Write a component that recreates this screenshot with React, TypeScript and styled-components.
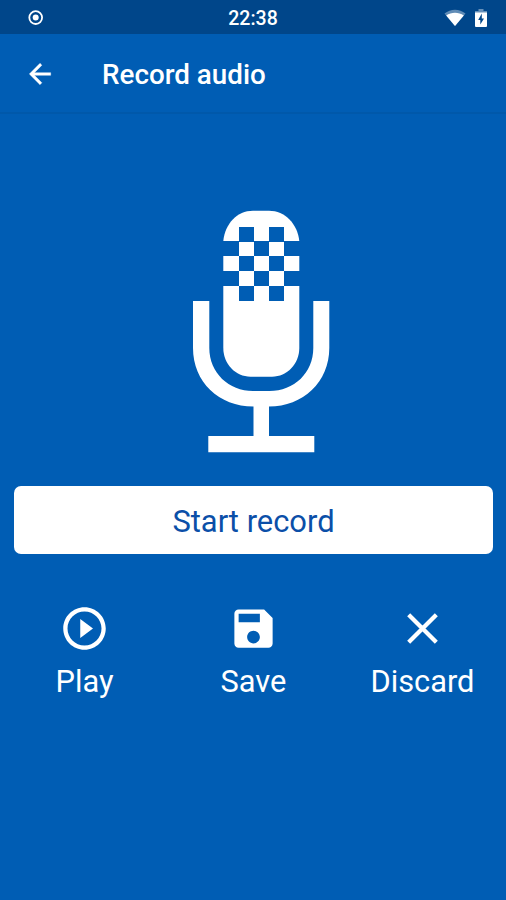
import React from "react";
import styled, { createGlobalStyle } from "styled-components";

const GlobalStyle = createGlobalStyle`
  * { box-sizing: border-box; }
  body { margin: 0; background: #005db4; }
`;

const Screen = styled.div`
  width: 506px;
  height: 900px;
  display: flex;
  flex-direction: column;
  background: #005db4;
  color: #fff;
  font-family: Roboto, "Liberation Sans", sans-serif;
  overflow: hidden;
`;

const StatusBar = styled.header`
  height: 34px;
  flex: none;
  display: grid;
  grid-template-columns: 1fr auto 1fr;
  align-items: center;
  padding: 2px 18px 0 28px;
  background: #00468a;
`;

const StatusIcons = styled.div<{ $end?: boolean }>`
  display: flex;
  align-items: center;
  gap: 8px;
  justify-content: ${(p) => (p.$end ? "flex-end" : "flex-start")};
`;

const Clock = styled.time`
  font-size: 19.5px;
  font-weight: 500;
  line-height: 22px;
  transform: translate(-5px, 1px);
`;

const AppBar = styled.nav`
  height: 80px;
  flex: none;
  display: flex;
  align-items: center;
  padding: 2px 0 0 24px;
  gap: 46px;
  border-bottom: 2px solid #0058aa;
`;

const IconButton = styled.button`
  display: flex;
  padding: 0;
  border: 0;
  background: none;
  color: inherit;
`;

const Title = styled.h1`
  margin: 0;
  padding-top: 2px;
  font-size: 27.8px;
  font-weight: 500;
  line-height: 32px;
`;

const Main = styled.main`
  display: flex;
  flex-direction: column;
  padding-top: 96px;
`;

const Microphone = styled.svg`
  display: block;
  margin-left: 193px;
  flex: none;
`;

const RecordButton = styled.button`
  height: 68px;
  margin: 33px 13px 0 14px;
  padding: 4px 0 0;
  border: 0;
  border-radius: 7px;
  background: #fff;
  color: #0b4fa8;
  font: 400 30.9px/36px Roboto, "Liberation Sans", sans-serif;
`;

const Actions = styled.div`
  display: grid;
  grid-template-columns: repeat(3, 169px);
  margin-top: 49px;
`;

const Action = styled.button`
  display: flex;
  flex-direction: column;
  align-items: center;
  gap: 10px;
  padding: 0;
  border: 0;
  background: none;
  color: #fff;
  font: 400 30.8px/36px Roboto, "Liberation Sans", sans-serif;
`;

const ActionIcon = styled.svg`
  display: block;
  width: 51px;
  height: 51px;
  fill: currentColor;
`;

const holes = [
  [46, 17], [76, 17],
  [30, 31], [61, 31], [91, 31],
  [46, 46], [76, 46],
  [30, 61], [61, 61], [91, 61],
  [46, 76], [76, 76],
];

export default function App() {
  return (
    <Screen>
      <GlobalStyle />
      <StatusBar>
        <StatusIcons>
          <svg width="16" height="16" viewBox="0 0 16 16" fill="none">
            <circle cx="7.7" cy="7.6" r="6.4" stroke="#fff" strokeWidth="1.8" />
            <circle cx="7.7" cy="7.6" r="3" fill="#fff" />
          </svg>
        </StatusIcons>
        <Clock>22:38</Clock>
        <StatusIcons $end>
          <svg width="22" height="18" viewBox="0 0 22 18">
            <path d="M0.5 4.5C6.5-.6 15.500-.6 21.500 4.500L11 17Z" fill="#fff" opacity=".38" />
            <path d="M2.200 6.500C7.500 2.800 14.500 2.800 19.800 6.500L11 17Z" fill="#fff" />
          </svg>
          <svg width="14" height="20" viewBox="0 0 14 20">
            <path d="M4.500 1h5v2H13v3H1V3h3.500Z" fill="#fff" opacity=".4" />
            <path d="M1 4.500h12v13.500q0 1-1 1H2q-1 0-1-1Z" fill="#fff" />
            <path d="M7.800 5.500 4.200 12H6.300v4.500l3.700-6H7.800Z" fill="#00468a" />
          </svg>
        </StatusIcons>
      </StatusBar>
      <AppBar>
        <IconButton aria-label="Back">
          <svg width="32" height="32" viewBox="0 0 24 24" fill="currentColor">
            <path d="M20 11H7.830l5.590-5.590L12 4l-8 8 8 8 1.410-1.410L7.830 13H20v-2z" stroke="currentColor" strokeWidth=".3" />
          </svg>
        </IconButton>
        <Title>Record audio</Title>
      </AppBar>
      <Main>
        <Microphone width="137" height="243" viewBox="0 0 137 243">
          <path
            d="M30.300 31C32 14 44 .8 60 .8H76C92 .8 104.500 14 106.300 31V138C106.300 154 94 166.700 79 166.700H57.500C42.500 166.700 30.300 154 30.300 138Z"
            fill="#fff"
          />
          {holes.map(([x, y]) => (
            <rect key={`${x}-${y}`} x={x} y={y} width={x === 91 || x === 30 ? 16 : 15} height="15" fill="#005db4" />
          ))}
          <path
            d="M0 91H16.300V138C16.300 163 36 181 60 181H76.500C101 181 120.300 163 120.300 138V91H136.300V138C136.300 172 110 196.500 76 196.500V226H121.300V242.200H15.300V226H60.500V196.500C26 196.500 0 172 0 138Z"
            fill="#fff"
          />
        </Microphone>
        <RecordButton>Start record</RecordButton>
        <Actions>
          <Action>
            <ActionIcon viewBox="0 0 24 24">
              <path d="M10 16.500l6-4.500-6-4.500v9zM12 2C6.480 2 2 6.480 2 12s4.480 10 10 10 10-4.480 10-10S17.520 2 12 2zm0 18c-4.410 0-8-3.590-8-8s3.590-8 8-8 8 3.590 8 8-3.590 8-8 8z" />
            </ActionIcon>
            Play
          </Action>
          <Action>
            <ActionIcon viewBox="0 0 24 24">
              <path d="M17 3H5c-1.110 0-2 .9-2 2v14c0 1.100.890 2 2 2h14c1.100 0 2-.9 2-2V7l-4-4zm-5 16c-1.660 0-3-1.340-3-3s1.340-3 3-3 3 1.340 3 3-1.340 3-3 3zm3-10H5V5h10v4z" />
            </ActionIcon>
            Save
          </Action>
          <Action>
            <ActionIcon viewBox="0 0 24 24">
              <path d="M6.200 6.200 17.800 17.800M17.800 6.200 6.200 17.800" stroke="#fff" strokeWidth="2" strokeLinecap="square" />
            </ActionIcon>
            Discard
          </Action>
        </Actions>
      </Main>
    </Screen>
  );
}
